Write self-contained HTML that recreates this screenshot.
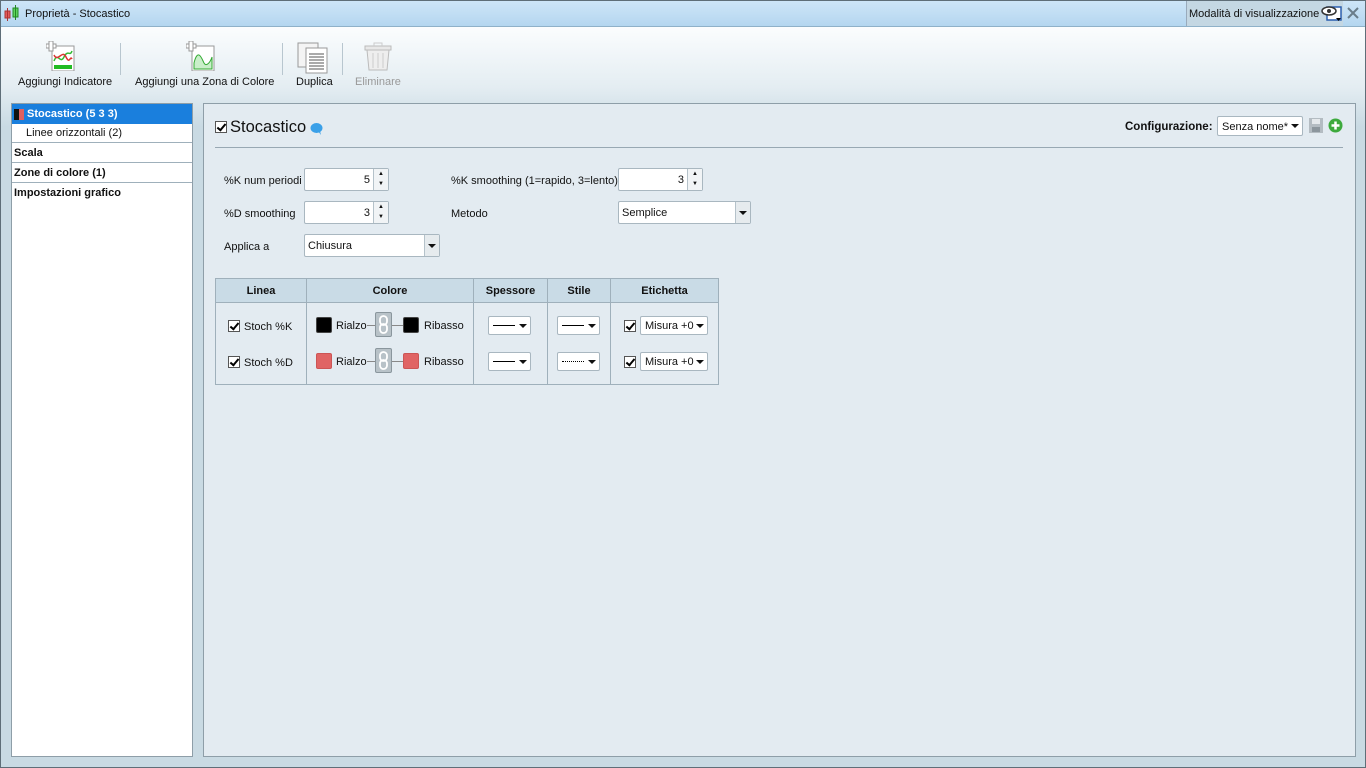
<!DOCTYPE html>
<html><head><meta charset="utf-8"><style>
*{box-sizing:border-box;margin:0;padding:0}
body{width:1366px;height:768px;overflow:hidden;font-family:"Liberation Sans",sans-serif;font-size:11px;color:#111;position:relative;background:#c9dae3}
.abs{position:absolute}
#frame{left:0;top:0;width:1366px;height:768px;border:1px solid #5f6e78}
#title{left:0;top:0;width:1366px;height:27px;background:linear-gradient(#cfe6f8,#b4d6f0);border-bottom:1px solid #8fb1c9}
#body{left:1px;top:27px;width:1364px;height:740px;background:linear-gradient(#fbfdfe 0px,#e4edf2 60px,#c9dae3 100px)}
.tb{color:#111;white-space:nowrap}
.sep{width:1px;height:32px;background:#b8c6cf;top:43px}
#left{left:11px;top:103px;width:182px;height:654px;background:#fff;border:1px solid #8e9ea8}
.li{height:20px;line-height:20px;font-weight:bold;padding-left:2px;border-bottom:1px solid #9fb0bb}
#right{left:203px;top:103px;width:1153px;height:654px;background:#e3ebf1;border:1px solid #8e9ea8}
.inp{background:#fff;border:1px solid #a9b7c0;border-radius:2px;height:23px}
.spin{position:absolute;right:0;top:0;width:15px;height:21px;border-left:1px solid #b5c2ca;background:#f1f4f6;font-size:6px;text-align:center;line-height:10px}
.dd{position:absolute;right:0;top:0;width:15px;height:21px;border-left:1px solid #b5c2ca;background:#e6ebee}
.arr{position:absolute;width:0;height:0;border-left:4px solid transparent;border-right:4px solid transparent;border-top:4px solid #111;left:50%;top:50%;margin:-2px 0 0 -4px}
.cb{display:inline-block;width:12px;height:12px;border:1px solid #555;background:#fff;position:absolute}
.cb:after{content:"";position:absolute;left:3px;top:0px;width:3px;height:7px;border:solid #000;border-width:0 2px 2px 0;transform:rotate(40deg)}
.sm{background:#fff;border:1px solid #a9b7c0;border-radius:2px;height:19px;position:absolute}
.sm .arr{left:auto;right:3px;margin:-2px 0 0 0}
.sw{position:absolute;width:16px;height:16px;border-radius:2px}
.lk{position:absolute;width:17px;height:25px;background:#b8c2c8;border:1px solid #8a969d;border-radius:2px}
.ln{position:absolute;height:1px;background:#888}
</style></head><body>
<div id="body" class="abs"></div>
<div id="title" class="abs">
 <svg class="abs" style="left:4px;top:5px" width="17" height="17"><rect x="1" y="6" width="5" height="7" fill="#e45b5b" stroke="#a33"/><line x1="3.5" y1="3" x2="3.5" y2="16" stroke="#a33"/><rect x="9" y="3" width="5" height="9" fill="#5fd35f" stroke="#282"/><line x1="11.5" y1="0" x2="11.5" y2="15" stroke="#282"/></svg>
 <div class="abs" style="left:25px;top:8px">Proprietà - Stocastico</div>
 <div class="abs" style="left:1186px;top:0;width:157px;height:26px;background:#c4d7e3;border-left:1px solid #9ab"><span class="abs" style="left:2px;top:8px">Modalità di visualizzazione</span>
 <svg class="abs" style="left:134px;top:4px" width="22" height="18"><rect x="6" y="3" width="14" height="13" fill="#fff" stroke="#2a5fb0" stroke-width="1.5"/><ellipse cx="8" cy="7" rx="7" ry="4" fill="#fff" stroke="#333" stroke-width="1.5"/><circle cx="8" cy="7" r="2" fill="#333"/><path d="M15 14h5l-2.5 3z" fill="#000"/></svg></div>
 <svg class="abs" style="left:1347px;top:7px" width="12" height="12"><path d="M1 1L11 11M11 1L1 11" stroke="#6a7d8a" stroke-width="2"/></svg>
</div>
<!-- toolbar -->
<svg class="abs" style="left:46px;top:41px" width="30" height="30"><rect x="6" y="5" width="22" height="25" fill="#fff" stroke="#999"/><path d="M8 20c4-10 6 4 10-4s6 0 8-6" stroke="#3b3" fill="none" stroke-width="1.5"/><path d="M8 14c4 8 8-6 12 2s4-2 6 2" stroke="#d33" fill="none" stroke-width="1.5"/><rect x="8" y="24" width="18" height="4" fill="#2b2"/><rect x="0" y="3" width="10" height="4" fill="#fff" stroke="#999"/><rect x="3" y="0" width="4" height="10" fill="#fff" stroke="#999"/></svg>
<div class="abs tb" style="left:18px;top:76px">Aggiungi Indicatore</div>
<div class="abs sep" style="left:120px"></div>
<svg class="abs" style="left:186px;top:41px" width="30" height="30"><rect x="6" y="5" width="22" height="25" fill="#fff" stroke="#999"/><path d="M8 28V22c4-16 8-4 10 0s6 0 8-6v12z" fill="#c9efc9" stroke="#3a3"/><rect x="0" y="3" width="10" height="4" fill="#fff" stroke="#999"/><rect x="3" y="0" width="4" height="10" fill="#fff" stroke="#999"/></svg>
<div class="abs tb" style="left:135px;top:76px">Aggiungi una Zona di Colore</div>
<div class="abs sep" style="left:282px"></div>
<svg class="abs" style="left:297px;top:42px" width="32" height="32"><rect x="1" y="1" width="20" height="24" fill="#f4f4f4" stroke="#999"/><rect x="9" y="6" width="21" height="25" fill="#fff" stroke="#999"/><path d="M12 12h15M12 15h15M12 18h15M12 21h15M12 24h15M12 27h15" stroke="#555"/></svg>
<div class="abs tb" style="left:296px;top:76px">Duplica</div>
<div class="abs sep" style="left:342px"></div>
<svg class="abs" style="left:364px;top:42px" width="28" height="30"><path d="M3 8h22l-2 20H5z" fill="#eee" stroke="#bbb"/><rect x="1" y="4" width="26" height="4" fill="#e8e8e8" stroke="#bbb"/><path d="M10 4V1h8v3M9 11v15M14 11v15M19 11v15" stroke="#ccc" fill="none"/></svg>
<div class="abs tb" style="left:355px;top:76px;color:#999">Eliminare</div>
<!-- left -->
<div id="left" class="abs">
 <div style="height:20px;background:#1a7fdd;color:#fff;font-weight:bold;line-height:20px;padding-left:15px;position:relative"><span class="abs" style="left:2px;top:5px;width:5px;height:11px;background:#111"></span><span class="abs" style="left:7px;top:5px;width:5px;height:11px;background:#e06060"></span>Stocastico (5 3 3)</div>
 <div style="height:19px;line-height:19px;padding-left:14px;border-bottom:1px solid #9fb0bb">Linee orizzontali (2)</div>
 <div class="li">Scala</div><div class="li">Zone di colore (1)</div><div class="li" style="border:0">Impostazioni grafico</div>
</div>
<!-- right -->
<div id="right" class="abs">
 <span class="cb" style="left:11px;top:17px"></span>
 <div class="abs" style="left:26px;top:14px;font-size:16.5px">Stocastico</div>
 <svg class="abs" style="left:106px;top:18px" width="14" height="13"><ellipse cx="6.5" cy="6" rx="6" ry="5" fill="#3aa0e8"/><path d="M8 9l3 4-1-4z" fill="#3aa0e8"/></svg>
 <div class="abs" style="left:921px;top:17px;font-weight:bold;font-size:11.5px">Configurazione:</div>
 <div class="abs inp" style="left:1013px;top:12px;width:86px;height:20px;padding:4px 4px;white-space:nowrap;overflow:hidden">Senza nome*<span class="arr" style="left:auto;right:3px;margin:-2px 0 0 0"></span></div>
 <svg class="abs" style="left:1105px;top:14px" width="14" height="15"><rect x="0" y="0" width="14" height="15" fill="#b4bcc2"/><rect x="3" y="1" width="8" height="5" fill="#e5e9ec"/><rect x="3" y="9" width="8" height="5" fill="#8c969d"/></svg>
 <svg class="abs" style="left:1124px;top:14px" width="15" height="15"><circle cx="7.5" cy="7.5" r="7" fill="#3daa3d"/><path d="M7.5 3.5v8M3.5 7.5h8" stroke="#fff" stroke-width="2.5"/></svg>
 <div class="abs" style="left:11px;top:43px;width:1128px;height:1px;background:#98a8b3"></div>

 <div class="abs" style="left:20px;top:71px">%K num periodi</div>
 <div class="abs inp" style="left:100px;top:64px;width:85px"><span class="abs" style="right:18px;top:5px">5</span><div class="spin">▲<br>▼</div></div>
 <div class="abs" style="left:20px;top:104px">%D smoothing</div>
 <div class="abs inp" style="left:100px;top:97px;width:85px"><span class="abs" style="right:18px;top:5px">3</span><div class="spin">▲<br>▼</div></div>
 <div class="abs" style="left:20px;top:137px">Applica a</div>
 <div class="abs inp" style="left:100px;top:130px;width:136px"><span class="abs" style="left:3px;top:5px">Chiusura</span><div class="dd"><span class="arr"></span></div></div>
 <div class="abs" style="left:247px;top:71px;white-space:nowrap">%K smoothing (1=rapido, 3=lento)</div>
 <div class="abs inp" style="left:414px;top:64px;width:85px"><span class="abs" style="right:18px;top:5px">3</span><div class="spin">▲<br>▼</div></div>
 <div class="abs" style="left:247px;top:104px">Metodo</div>
 <div class="abs inp" style="left:414px;top:97px;width:133px"><span class="abs" style="left:3px;top:5px">Semplice</span><div class="dd"><span class="arr"></span></div></div>

 <div class="abs" style="left:11px;top:174px;width:504px;height:107px;border:1px solid #9fb0bb"></div>
 <div class="abs" style="left:12px;top:175px;width:502px;height:24px;background:#c9dbe6;border-bottom:1px solid #9fb0bb"></div>
 <div class="abs" style="left:102px;top:175px;width:1px;height:105px;background:#9fb0bb"></div>
 <div class="abs" style="left:269px;top:175px;width:1px;height:105px;background:#9fb0bb"></div>
 <div class="abs" style="left:343px;top:175px;width:1px;height:105px;background:#9fb0bb"></div>
 <div class="abs" style="left:406px;top:175px;width:1px;height:105px;background:#9fb0bb"></div>
 <div class="abs" style="left:12px;top:181px;width:90px;text-align:center;font-weight:bold">Linea</div>
 <div class="abs" style="left:103px;top:181px;width:166px;text-align:center;font-weight:bold">Colore</div>
 <div class="abs" style="left:270px;top:181px;width:73px;text-align:center;font-weight:bold">Spessore</div>
 <div class="abs" style="left:344px;top:181px;width:62px;text-align:center;font-weight:bold">Stile</div>
 <div class="abs" style="left:407px;top:181px;width:107px;text-align:center;font-weight:bold">Etichetta</div>
</div>
<span class="cb" style="left:228px;top:320px"></span><div class="abs" style="left:244px;top:321px">Stoch %K</div>
<span class="cb" style="left:228px;top:356px"></span><div class="abs" style="left:244px;top:357px">Stoch %D</div>

<div class="sw" style="left:316px;top:317px;background:#000;border:1px solid #444"></div>
<div class="abs" style="left:336px;top:320px">Rialzo</div>
<div class="ln" style="left:367px;top:325px;width:8px"></div>
<div class="lk" style="left:375px;top:312px"><svg width="15" height="23"><rect x="4" y="3" width="7" height="9" rx="3.5" fill="none" stroke="#fff" stroke-width="1.8"/><rect x="4" y="11" width="7" height="9" rx="3.5" fill="none" stroke="#fff" stroke-width="1.8"/></svg></div>
<div class="ln" style="left:392px;top:325px;width:11px"></div>
<div class="sw" style="left:403px;top:317px;background:#000;border:1px solid #444"></div>
<div class="abs" style="left:424px;top:320px">Ribasso</div>

<div class="sw" style="left:316px;top:353px;background:#e06464;border:1px solid #c55"></div>
<div class="abs" style="left:336px;top:356px">Rialzo</div>
<div class="ln" style="left:367px;top:361px;width:8px"></div>
<div class="lk" style="left:375px;top:348px"><svg width="15" height="23"><rect x="4" y="3" width="7" height="9" rx="3.5" fill="none" stroke="#fff" stroke-width="1.8"/><rect x="4" y="11" width="7" height="9" rx="3.5" fill="none" stroke="#fff" stroke-width="1.8"/></svg></div>
<div class="ln" style="left:392px;top:361px;width:11px"></div>
<div class="sw" style="left:403px;top:353px;background:#e06464;border:1px solid #c55"></div>
<div class="abs" style="left:424px;top:356px">Ribasso</div>

<div class="sm" style="left:488px;top:316px;width:43px"><div class="abs" style="left:4px;top:8px;width:22px;height:1px;background:#000"></div><span class="arr"></span></div>
<div class="sm" style="left:488px;top:352px;width:43px"><div class="abs" style="left:4px;top:8px;width:22px;height:1px;background:#000"></div><span class="arr"></span></div>
<div class="sm" style="left:557px;top:316px;width:43px"><div class="abs" style="left:4px;top:8px;width:22px;height:1px;background:#000"></div><span class="arr"></span></div>
<div class="sm" style="left:557px;top:352px;width:43px"><div class="abs" style="left:4px;top:8px;width:22px;height:1px;border-top:1px dotted #000"></div><span class="arr"></span></div>

<span class="cb" style="left:624px;top:320px"></span>
<div class="sm" style="left:640px;top:316px;width:68px"><span class="abs" style="left:4px;top:3px">Misura +0</span><span class="arr"></span></div>
<span class="cb" style="left:624px;top:356px"></span>
<div class="sm" style="left:640px;top:352px;width:68px"><span class="abs" style="left:4px;top:3px">Misura +0</span><span class="arr"></span></div>
<div id="frame" class="abs" style="pointer-events:none"></div>
</body></html>
